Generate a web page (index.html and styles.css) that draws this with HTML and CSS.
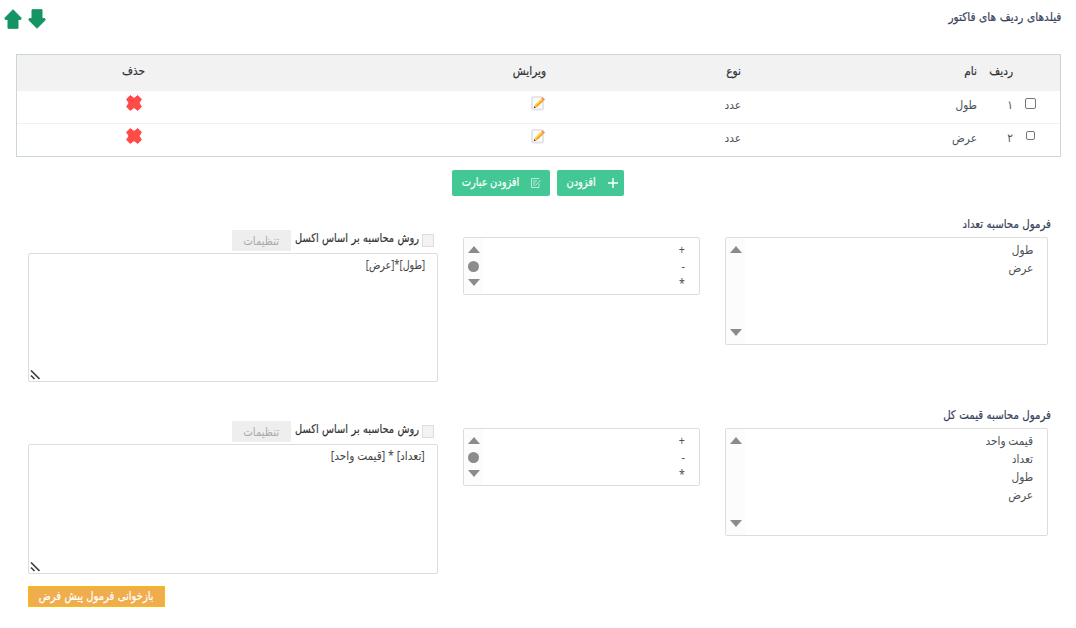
FILE: index.html
```html
<!DOCTYPE html>
<html lang="fa" dir="rtl">
<head>
<meta charset="utf-8">
<title>فیلدهای ردیف های فاکتور</title>
<link rel="stylesheet" href="styles.css">
</head>
<body>
<svg class="defs" width="0" height="0">
  <symbol id="cross" viewBox="0 0 16 16"><path fill="#ff4b48" stroke="#ff4b48" stroke-linejoin="round" d="M4.2 .6 8 3.4 11.8 .6 15.4 4.2 13 8 15.4 11.8 11.8 15.4 8 12.6 4.2 15.4 .6 11.8 3 8 .6 4.2Z"/></symbol>
  <symbol id="edit" viewBox="0 0 15 15"><rect x="1" y="1.2" width="11" height="12.3" rx="1" fill="#fff" stroke="#e3e3e6" stroke-width="1.8"/><path d="M3 12 4 8.5 10.5 2.2 13 4.6 6.5 11Z" fill="#ffd440"/><path d="M5.5 11.2 12.5 4.8 11.7 3.8 4.8 10Z" fill="#f39a28"/><path d="M10.3 2.3 11.5 1.2 14 3.5 12.8 4.7Z" fill="#ef8b6b"/><path d="M3 12 4 8.5 6.5 11Z" fill="#f2c08c"/><path d="M2.8 12.3 3.3 10.3 4.8 11.6Z" fill="#332d2d"/></symbol>
  <symbol id="grip" viewBox="0 0 10 10"><path d="M1 .5 9.5 9M1 5.5 4.5 9" stroke="#444" stroke-width="1.7"/></symbol>
</svg>
<header class="header">
  <h1 class="title">فیلدهای ردیف های فاکتور</h1>
  <div class="arrows">
    <svg width="18" height="20" viewBox="0 0 18 20"><path fill="#159463" stroke="#159463" stroke-linejoin="round" d="M4 .7H14V9.5L17 9.8V11.2L9 19.3 1 11.2V9.8L4 9.5Z"/></svg>
    <svg width="18" height="20" viewBox="0 0 18 20"><path fill="#159463" stroke="#159463" stroke-linejoin="round" d="M4 19.3H14V10.5L17 10.2V8.8L9 .7 1 8.8V10.2L4 10.5Z"/></svg>
  </div>
</header>
<main>
  <section class="table">
    <div class="row head"><span></span><span>ردیف</span><span>نام</span><span>نوع</span><span>ویرایش</span><span>حذف</span></div>
    <div class="row"><span class="pick"><i class="box"></i></span><span>۱</span><span>طول</span><span>عدد</span><span class="icon"><svg width="15" height="15"><use href="#edit"/></svg></span><span class="icon"><svg class="del" width="16" height="16"><use href="#cross"/></svg></span></div>
    <div class="row"><span class="pick"><i class="box small"></i></span><span>۲</span><span>عرض</span><span>عدد</span><span class="icon"><svg width="15" height="15"><use href="#edit"/></svg></span><span class="icon"><svg class="del" width="16" height="16"><use href="#cross"/></svg></span></div>
  </section>
  <div class="actions">
    <button class="add"><svg width="10" height="10" viewBox="0 0 10 10"><path d="M5 0V10M0 5H10" stroke="#fff" stroke-width="1.4"/></svg><span>افزودن</span></button>
    <button class="add wide"><svg width="10" height="10" viewBox="0 0 10 10"><path d="M8 5.5V9.5H.5V.5H8M2 3H6M2 5H4.5M2 7H4M4.5 7.5 9.5 2" fill="none" stroke="#c9f1e2" stroke-width=".9"/></svg><span>افزودن عبارت</span></button>
  </div>
  <section class="formula">
    <div class="fields">
      <h2 class="label">فرمول محاسبه تعداد</h2>
      <div class="list"><ul class="options"><li>طول</li><li>عرض</li></ul><div class="scroll"><i class="up"></i><i class="down"></i></div></div>
    </div>
    <div class="list ops"><ul class="options"><li>+</li><li>-</li><li>*</li></ul><div class="scroll"><i class="up"></i><i class="thumb"></i><i class="down"></i></div></div>
    <div class="editor">
      <div class="excel"><i class="check"></i><span class="method">روش محاسبه بر اساس اکسل</span><button class="settings"><span>تنظیمات</span></button></div>
      <div class="area"><span class="expr tight">[طول]*[عرض]</span><svg class="grip" width="10" height="10"><use href="#grip"/></svg></div>
    </div>
  </section>
  <section class="formula">
    <div class="fields">
      <h2 class="label">فرمول محاسبه قیمت کل</h2>
      <div class="list"><ul class="options"><li>قیمت واحد</li><li>تعداد</li><li>طول</li><li>عرض</li></ul><div class="scroll"><i class="up"></i><i class="down"></i></div></div>
    </div>
    <div class="list ops"><ul class="options"><li>+</li><li>-</li><li>*</li></ul><div class="scroll"><i class="up"></i><i class="thumb"></i><i class="down"></i></div></div>
    <div class="editor">
      <div class="excel"><i class="check"></i><span class="method">روش محاسبه بر اساس اکسل</span><button class="settings"><span>تنظیمات</span></button></div>
      <div class="area tall"><span class="expr">[تعداد] * [قیمت واحد]</span><svg class="grip" width="10" height="10"><use href="#grip"/></svg></div>
      <button class="reset"><span>بازخوانی فرمول پیش فرض</span></button>
    </div>
  </section>
</main>
</body>
</html>
```
FILE: styles.css
```css
* { box-sizing: border-box; }
body { margin: 0; height: 628px; overflow: hidden; background: #fff; color: #4b5258; font: 12px/18px "Noto Sans", "DejaVu Sans", sans-serif; }
svg { display: block; flex: none; }
.defs { position: absolute; }
h1, h2, ul { margin: 0; padding: 0; list-style: none; }
button { font: inherit; border: 0; padding: 0; white-space: nowrap; display: flex; align-items: center; justify-content: center; }
.header { height: 54px; display: flex; justify-content: space-between; padding: 8px 15px 0 5px; }
.title, .label { font-size: 12px; line-height: 18px; font-weight: 400; color: #36425a; white-space: nowrap; word-spacing: 1px; -webkit-text-stroke: .2px; }
/* condensed lettering, anchored to the right edge */
.title, .label, .options li, .method, .expr, .row > span:not(.pick):not(.icon) { transform: scaleX(.88); transform-origin: right; }
.title { transform: scaleX(.88); }
.label { transform: scaleX(.85); }
button span { transform: scaleX(.85); }
.arrows { display: flex; gap: 6px; padding-top: 1px; margin-left: -1px; }
.table { margin: 0 15px 0 16px; height: 103px; border: 1px solid #cbd5dc; }
.row { display: grid; grid-template-columns: 47px 36px 236px 195px 401px 1fr; height: 32px; align-items: center; }
.row + .row + .row { border-top: 1px solid #f0f0f0; height: 33px; }
.row > span { padding-bottom: 4px; white-space: nowrap; }
.row.head { height: 36px; background: #f2f2f2; color: #2f3338; -webkit-text-stroke: .2px; }
.row .icon { padding: 0 0 7px; }
.row .icon .del { margin: -1px 3px 1px 0; }
.row .pick { padding: 0 24px 7px 0; }
.box { display: block; width: 11px; height: 11px; border: 1px solid #777; border-radius: 2px; }
.small { width: 9px; height: 9px; margin: -1px 1px 1px 0; }
.actions { display: flex; justify-content: center; gap: 7px; padding-top: 13px; }
.add { width: 67px; height: 26px; border-radius: 2px; background: #43c794; color: #fff; justify-content: flex-start; padding-right: 6px; gap: 12px; }
.add.wide { width: 98px; padding-right: 9px; }
.add span { padding-bottom: 3px; transform: scaleX(.82); transform-origin: right; -webkit-text-stroke: .2px; }
.formula { display: grid; grid-template-columns: 323px 237px 410px; gap: 25px; padding: 20px 28px 0; height: 191px; }
.label { margin: -1px -3px 4px 0; }
.list { height: 108px; border: 1px solid #ddd; border-radius: 2px; display: flex; justify-content: space-between; }
.options { padding: 3px 14px 0; }
.scroll { width: 19px; background: #fcfcfc; display: flex; flex-direction: column; align-items: center; justify-content: space-between; padding: 8px 0; }
.up, .down { border: 6.5px solid transparent; border-bottom: 7px solid #8b8b8b; border-top: 0; }
.down { border-top: 7px solid #8b8b8b; border-bottom: 0; }
.thumb { width: 11px; height: 11px; border-radius: 50%; background: #8b8b8b; }
.ops { height: 58px; margin-top: 21px; }
.ops .options { line-height: 17px; }
.ops .scroll { padding: 8px 0; }
.editor { padding-top: 14px; }
.excel { display: flex; height: 21px; padding-right: 4px; }
.check { width: 12px; height: 13px; margin-top: 4px; background: #f6f2f2; border: 1px solid #ddd; }
.method { flex: none; width: 124px; margin: -1px 3px 0 4px; white-space: nowrap; word-spacing: 1px; color: #333; transform: scaleX(.82); -webkit-text-stroke: .2px; }
.settings { flex: none; width: 59px; height: 21px; background: #eee; color: #aaa; }
.area { height: 129px; margin-top: 2px; border: 1px solid #ddd; border-radius: 2px; padding: 2px 12px 0; display: flex; justify-content: space-between; align-items: flex-start; color: #444; }
.area.tall { height: 130px; }
.expr.tight { transform: scaleX(.79); }
.grip { align-self: flex-end; margin: 0 0 1px -11px; }
.reset { width: 137px; height: 21px; margin: 12px auto 0 0; background: #f0ad4e; border: 1px solid #fbbc05; color: #fff; }
.reset span { margin-top: -2px; word-spacing: 1px; transform: scaleX(.83); -webkit-text-stroke: .2px; }
```
